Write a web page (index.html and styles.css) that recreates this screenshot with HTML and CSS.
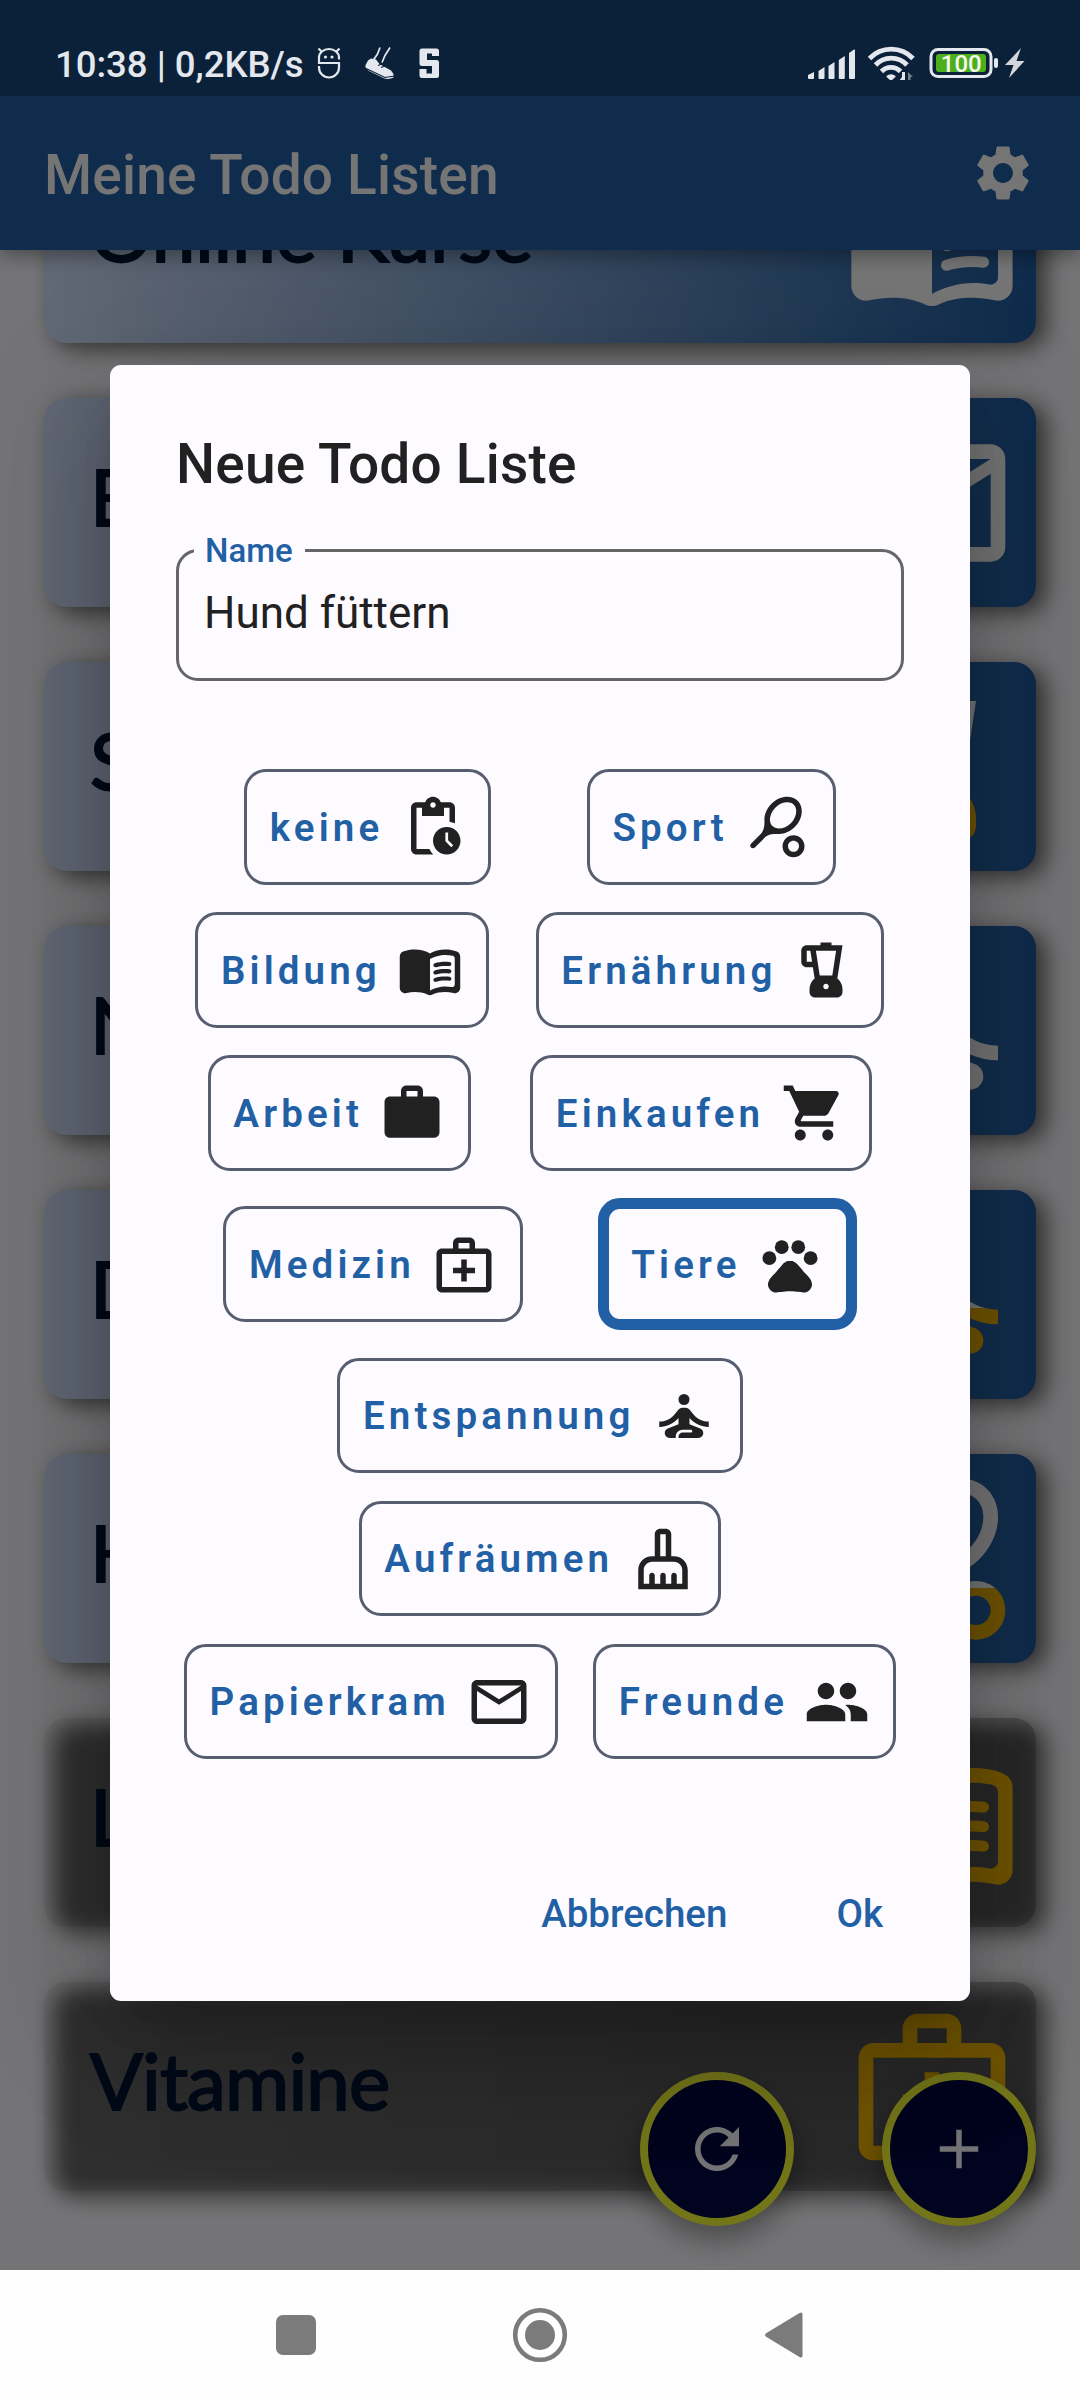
FILE: index.html
```html
<!DOCTYPE html>
<html lang="de">
<head>
<meta charset="utf-8">
<title>Meine Todo Listen</title>
<link rel="stylesheet" href="styles.css">
</head>
<body>
<svg class="sprite" aria-hidden="true">
  <defs>
    <linearGradient id="progress57" gradientUnits="userSpaceOnUse" x1="0" y1="0" x2="0" y2="24">
      <stop offset=".575" stop-color="#fff"/><stop offset=".575" stop-color="#f5b800"/>
    </linearGradient>
    <linearGradient id="progress66" gradientUnits="userSpaceOnUse" x1="0" y1="0" x2="0" y2="24">
      <stop offset=".666" stop-color="#fff"/><stop offset=".666" stop-color="#f5b800"/>
    </linearGradient>
    <symbol id="settings" viewBox="0 0 24 24"><path d="M19.14 12.94c.04-.3.06-.61.06-.94 0-.32-.02-.64-.07-.94l2.03-1.58c.18-.14.23-.41.12-.61l-1.92-3.32c-.12-.22-.37-.29-.59-.22l-2.39.96c-.5-.38-1.03-.7-1.62-.94l-.36-2.54c-.04-.24-.24-.41-.48-.41h-3.84c-.24 0-.43.17-.47.41l-.36 2.54c-.59.24-1.13.57-1.62.94l-2.39-.96c-.22-.08-.47 0-.59.22L2.74 8.87c-.12.21-.08.47.12.61l2.03 1.58c-.05.3-.09.63-.09.94s.02.64.07.94l-2.03 1.58c-.18.14-.23.41-.12.61l1.92 3.32c.12.22.37.29.59.22l2.39-.96c.5.38 1.03.7 1.62.94l.36 2.54c.05.24.24.41.48.41h3.84c.24 0 .44-.17.47-.41l.36-2.54c.59-.24 1.13-.56 1.62-.94l2.39.96c.22.08.47 0 .59-.22l1.92-3.32c.12-.22.07-.47-.12-.61l-2.01-1.58zM12 15.6c-1.98 0-3.6-1.62-3.6-3.6s1.62-3.6 3.6-3.6 3.6 1.62 3.6 3.6-1.62 3.6-3.6 3.6z"/></symbol>
    <symbol id="pending" viewBox="0 0 24 24"><path d="M17 12c-2.76 0-5 2.24-5 5s2.24 5 5 5 5-2.24 5-5-2.24-5-5-5zm1.65 7.35L16.5 17.2V14h1v2.79l1.85 1.85-.7.71zM18 3h-3.18C14.4 1.84 13.3 1 12 1s-2.4.84-2.82 2H6c-1.1 0-2 .9-2 2v15c0 1.1.9 2 2 2h6.11c-.59-.57-1.07-1.25-1.42-2H6V5h2v3h8V5h2v5.08c.71.1 1.38.31 2 .6V5c0-1.1-.9-2-2-2zm-6 2c-.55 0-1-.45-1-1s.45-1 1-1 1 .45 1 1-.45 1-1 1z"/></symbol>
    <symbol id="book" viewBox="0 0 24 24"><path d="M17.5 4.5c-1.95 0-4.05.4-5.5 1.5-1.45-1.1-3.55-1.5-5.5-1.5-1.45 0-2.99.22-4.28.79C1.49 5.62 1 6.33 1 7.14v11.28c0 1.3 1.22 2.26 2.48 1.94.98-.25 2.02-.36 3.02-.36 1.56 0 3.22.26 4.56.92.6.3 1.28.3 1.87 0 1.34-.67 3-.92 4.56-.92 1 0 2.04.11 3.02.36 1.26.33 2.48-.63 2.48-1.94V7.14c0-.81-.49-1.52-1.22-1.85-1.28-.57-2.82-.79-4.27-.79zM21 17.23c0 .63-.58 1.09-1.2.98-.75-.14-1.53-.2-2.3-.2-1.7 0-4.15.65-5.5 1.5V8c1.35-.85 3.8-1.5 5.5-1.5.92 0 1.83.09 2.7.28.46.1.8.51.8.98v9.47z"/><path id="book-line" d="M13.98 11.01c-.32 0-.61-.2-.71-.52-.13-.39.09-.82.48-.94 1.54-.5 3.53-.66 5.36-.45.41.05.71.42.66.83s-.42.71-.83.66c-1.62-.19-3.39-.04-4.73.39-.08.01-.16.03-.23.03z"/><use href="#book-line" y="2.66"/><use href="#book-line" y="5.32"/></symbol>
    <symbol id="tennis" viewBox="0 0 24 24"><path d="M19.52 2.49c-2.34-2.34-6.62-1.87-9.55 1.06-1.6 1.6-2.52 3.87-2.54 5.46-.02 1.58.26 3.89-1.35 5.5l-3.54 3.54c-.39.39-.39 1.02 0 1.41s1.02.39 1.41 0l3.54-3.54c1.61-1.61 3.92-1.33 5.5-1.35s3.86-.94 5.46-2.54c2.93-2.92 3.41-7.2 1.07-9.54zm-9.2 9.19c-1.53-1.53-1.05-4.61 1.06-6.72s5.18-2.59 6.72-1.06c1.53 1.53 1.05 4.61-1.06 6.72s-5.18 2.59-6.72 1.06zM18 17c.53 0 1.04.21 1.41.59.78.78.78 2.05 0 2.83-.37.37-.88.58-1.41.58s-1.04-.21-1.41-.59c-.78-.78-.78-2.05 0-2.83.37-.37.88-.58 1.41-.58m0-2c-1.02 0-2.05.39-2.83 1.17-1.56 1.56-1.56 4.09 0 5.66.78.78 1.81 1.17 2.83 1.17s2.05-.39 2.83-1.17c1.56-1.56 1.56-4.09 0-5.66C20.05 15.39 19.02 15 18 15z"/></symbol>
    <symbol id="blender" viewBox="0 0 24 24"><path d="M16.13 15.13L18 3h-4V2h-4v1H5c-1.1 0-2 .9-2 2v4c0 1.1.9 2 2 2h2.23l.64 4.13C6.74 16.05 6 17.43 6 19v1c0 1.1.9 2 2 2h8c1.1 0 2-.9 2-2v-1c0-1.57-.74-2.95-1.87-3.87zM5 9V5h1.31l.62 4H5zm7 10c-.55 0-1-.45-1-1s.45-1 1-1 1 .45 1 1-.45 1-1 1zm2.29-5H9.72L8.33 5h7.34l-1.38 9z"/></symbol>
    <symbol id="work" viewBox="0 0 24 24"><path d="M20 6h-4V4c0-1.11-.89-2-2-2h-4c-1.11 0-2 .89-2 2v2H4c-1.11 0-1.99.89-1.99 2L2 19c0 1.11.89 2 2 2h16c1.11 0 2-.89 2-2V8c0-1.11-.89-2-2-2zm-6 0h-4V4h4v2z"/></symbol>
    <symbol id="cart" viewBox="0 0 24 24"><path d="M7 18c-1.1 0-1.99.9-1.99 2S5.9 22 7 22s2-.9 2-2-.9-2-2-2zM1 2v2h2l3.6 7.59-1.35 2.45c-.16.28-.25.61-.25.96 0 1.1.9 2 2 2h12v-2H7.42c-.14 0-.25-.11-.25-.25l.03-.12.9-1.63h7.45c.75 0 1.41-.41 1.75-1.03l3.58-6.49c.08-.14.12-.31.12-.48 0-.55-.45-1-1-1H5.21l-.94-2H1zm16 16c-1.1 0-1.99.9-1.99 2s.89 2 1.99 2 2-.9 2-2-.9-2-2-2z"/></symbol>
    <symbol id="medical" viewBox="0 0 24 24"><path d="M20 6h-4V4c0-1.1-.9-2-2-2h-4c-1.1 0-2 .9-2 2v2H4c-1.1 0-2 .9-2 2v12c0 1.1.9 2 2 2h16c1.1 0 2-.9 2-2V8c0-1.1-.9-2-2-2zM10 4h4v2h-4V4zm10 16H4V8h16v12zM13 10h-2v3H8v2h3v3h2v-3h3v-2h-3v-3z"/></symbol>
    <symbol id="pets" viewBox="0 0 24 24"><circle cx="4.5" cy="9.5" r="2.5"/><circle cx="9" cy="5.5" r="2.5"/><circle cx="15" cy="5.5" r="2.5"/><circle cx="19.5" cy="9.5" r="2.5"/><path d="M17.34 14.86c-.87-1.02-1.6-1.89-2.48-2.91-.46-.54-1.05-1.08-1.75-1.32-.11-.04-.22-.07-.33-.09-.25-.04-.52-.04-.78-.04s-.53 0-.79.05c-.11.02-.22.05-.33.09-.7.24-1.28.78-1.75 1.32-.87 1.02-1.6 1.89-2.48 2.91-1.31 1.31-2.92 2.76-2.62 4.79.29 1.02 1.02 2.03 2.33 2.32.73.15 3.06-.44 5.54-.44h.18c2.48 0 4.81.58 5.54.44 1.31-.29 2.04-1.31 2.33-2.32.31-2.04-1.3-3.49-2.61-4.8z"/></symbol>
    <symbol id="yoga" viewBox="0 0 24 24"><circle cx="12" cy="6" r="2"/><path d="M21 16v-2c-2.24 0-4.16-.96-5.6-2.68l-1.34-1.6c-.38-.46-.94-.72-1.53-.72h-1.05c-.59 0-1.15.26-1.53.72l-1.34 1.6C7.16 13.04 5.24 14 3 14v2c2.77 0 5.19-1.17 7-3.25V15l-3.88 1.55c-.67.27-1.12.93-1.12 1.66C5 19.2 5.8 20 6.79 20H9v-.5c0-1.38 1.12-2.5 2.5-2.5h3c.28 0 .5.22.5.5s-.22.5-.5.5h-3c-.83 0-1.5.67-1.5 1.5v.5h7.21c.99 0 1.79-.8 1.79-1.79 0-.73-.45-1.39-1.12-1.66L14 15v-2.25c1.81 2.08 4.23 3.25 7 3.25z"/></symbol>
    <symbol id="cleaning" viewBox="0 0 24 24"><path d="M16 11h-1V3c0-1.1-.9-2-2-2h-2c-1.1 0-2 .9-2 2v8H8c-2.76 0-5 2.24-5 5v7h18v-7c0-2.76-2.24-5-5-5zM11 3h2v8h-2V3zm8 18h-2v-3c0-.55-.45-1-1-1s-1 .45-1 1v3h-2v-3c0-.55-.45-1-1-1s-1 .45-1 1v3H9v-3c0-.55-.45-1-1-1s-1 .45-1 1v3H5v-5c0-1.65 1.35-3 3-3h8c1.65 0 3 1.35 3 3v5z"/></symbol>
    <symbol id="mail" viewBox="0 0 24 24"><path d="M20 4H4c-1.1 0-1.99.9-1.99 2L2 18c0 1.1.9 2 2 2h16c1.1 0 2-.9 2-2V6c0-1.1-.9-2-2-2zm0 14H4V8l8 5 8-5v10zm-8-7L4 6h16l-8 5z"/></symbol>
    <symbol id="people" viewBox="0 0 24 24"><path d="M16 11c1.66 0 2.99-1.34 2.99-3S17.66 5 16 5c-1.66 0-3 1.34-3 3s1.34 3 3 3zm-8 0c1.66 0 2.99-1.34 2.99-3S9.66 5 8 5C6.34 5 5 6.34 5 8s1.34 3 3 3zm0 2c-2.33 0-7 1.17-7 3.5V19h14v-2.5c0-2.33-4.67-3.5-7-3.5zm8 0c-.29 0-.62.02-.97.05 1.16.84 1.97 1.97 1.97 3.45V19h6v-2.5c0-2.33-4.67-3.5-7-3.5z"/></symbol>
    <symbol id="refresh" viewBox="0 0 24 24"><path d="M17.65 6.35C16.2 4.9 14.21 4 12 4c-4.42 0-7.99 3.58-7.99 8s3.57 8 7.99 8c3.73 0 6.84-2.55 7.73-6h-2.08c-.82 2.33-3.04 4-5.65 4-3.31 0-6-2.69-6-6s2.69-6 6-6c1.66 0 3.14.69 4.22 1.78L13 11h7V4l-2.35 2.35z"/></symbol>
    <symbol id="add" viewBox="0 0 24 24"><path d="M19 13h-6v6h-2v-6H5v-2h6V5h2v6h6v2z"/></symbol>
  </defs>
</svg>

<div class="app">
  <header class="app-bar">
    <h1 class="app-title">Meine Todo Listen</h1>
    <svg class="icon"><use href="#settings"/></svg>
  </header>
  <main class="lists">
    <article class="card"><span class="card-name">Online Kurse</span><svg class="card-icon"><use href="#book"/></svg></article>
    <article class="card"><span class="card-name">E</span><svg class="card-icon"><use href="#mail"/></svg></article>
    <article class="card"><span class="card-name">S</span><svg class="card-icon part66"><use href="#blender"/></svg></article>
    <article class="card"><span class="card-name">N</span><svg class="card-icon"><use href="#yoga"/></svg></article>
    <article class="card"><span class="card-name">D</span><svg class="card-icon part57"><use href="#yoga"/></svg></article>
    <article class="card"><span class="card-name">K</span><svg class="card-icon part66"><use href="#tennis"/></svg></article>
    <article class="card done"><span class="card-name">L</span><svg class="card-icon"><use href="#book"/></svg></article>
    <article class="card done"><span class="card-name">Vitamine</span><svg class="card-icon"><use href="#medical"/></svg></article>
  </main>
  <div class="fabs">
    <div class="fab"><svg class="icon"><use href="#refresh"/></svg></div>
    <div class="fab"><svg class="icon"><use href="#add"/></svg></div>
  </div>
</div>

<div class="scrim">
  <section class="dialog">
    <h2 class="dialog-title">Neue Todo Liste</h2>
    <div class="field"><span class="field-label">Name</span><span class="field-value">Hund füttern</span></div>
    <div class="chips">
      <div class="chip">keine<svg class="icon"><use href="#pending"/></svg></div>
      <div class="chip">Sport<svg class="icon"><use href="#tennis"/></svg></div>
      <div class="chip">Bildung<svg class="icon"><use href="#book"/></svg></div>
      <div class="chip">Ernährung<svg class="icon"><use href="#blender"/></svg></div>
      <div class="chip">Arbeit<svg class="icon"><use href="#work"/></svg></div>
      <div class="chip">Einkaufen<svg class="icon"><use href="#cart"/></svg></div>
      <div class="chip">Medizin<svg class="icon"><use href="#medical"/></svg></div>
      <div class="chip selected">Tiere<svg class="icon"><use href="#pets"/></svg></div>
      <div class="chip">Entspannung<svg class="icon"><use href="#yoga"/></svg></div>
      <div class="chip">Aufräumen<svg class="icon"><use href="#cleaning"/></svg></div>
      <div class="chip">Papierkram<svg class="icon"><use href="#mail"/></svg></div>
      <div class="chip">Freunde<svg class="icon"><use href="#people"/></svg></div>
    </div>
    <div class="actions"><span>Abbrechen</span><span>Ok</span></div>
  </section>
</div>

<div class="status-bar">
  <span class="status-text">10:38 | 0,2KB/s</span>
  <svg class="status-left" width="124" height="36" viewBox="0 0 124 36">
    <g fill="none" stroke="#e4e8ee" stroke-width="2.2">
      <path d="M22 15.500v-2a10 8.500 0 0 0-20 0v5.500h20v4.500a10 10 0 0 1-20 0v-1.500"/>
      <path d="M4.500 7.500L1.500 4.500M19.500 7.500l3-3"/>
    </g>
    <g fill="#e4e8ee"><circle cx="8.500" cy="13" r="1.600"/><circle cx="15" cy="13" r="1.600"/>
      <path d="M48.500 21l2.500-4.500 3-2 5 1 3.500 4.500 11.500 6.500 2.500 3.500v3.500q-4 2.200-9 1L52 27l-3.500-3z"/>
      <path d="M102.500 7q0-2.500 2.500-2.500h14.500q2.500 0 2.500 2.500v5h-7V9.500h-5V16h9.500q2.500 0 2.500 2.500v13q0 2.500-2.500 2.500H105q-2.500 0-2.500-2.500V25h7v4.500h5.500v-7.500h-10q-2.500 0-2.500-2.500z"/></g>
    <path d="M63 3.500l-2.500 6.500-5.500 8M73 3.500l-5 8-3 7" fill="none" stroke="#e4e8ee" stroke-width="1.700"/>
    <path d="M48 24l20 9.500 9.500-1.500M61 21.500l4-1.500M64 23.500l4-1.500" fill="none" stroke="#0b2138" stroke-width="1.200"/>
  </svg>
  <svg class="status-right" width="220" height="40" viewBox="0 0 220 40">
    <path d="M1 38v-3l6-3v6q0 1-1 1H2q-1 0-1-1zM11.500 38V31l6-4v11q0 1-1 1h-4q-1 0-1-1zM21.500 38V26l6-4v16q0 1-1 1h-4q-1 0-1-1zM31.800 38V20l6-4v22q0 1-1 1h-4q-1 0-1-1zM42 38V13l5-3.500q1-.5 1 1V38q0 1-1 1h-4q-1 0-1-1z" fill="#e4e8ee"/>
    <g fill="none" stroke="#e4e8ee" stroke-width="4.800">
      <path d="M62.500 18.500a30 30 0 0 1 43.500 0M68.500 25a21.500 21.500 0 0 1 31.500 0M74.500 31.500a13 13 0 0 1 19 0"/>
    </g>
    <path d="M79.500 36a6.500 6.500 0 0 1 9 0v1l-3.500 3h-2L79.500 37z" fill="#e4e8ee"/>
    <path d="M98 32v9h-6l3-4V32z" fill="#e4e8ee"/><path d="M101 41v-9l5 5h-2.500v4z" fill="#77828f"/>
    <rect x="124" y="9.500" width="60" height="27" rx="7" fill="none" stroke="#e4e8ee" stroke-width="3"/>
    <rect x="129" y="14" width="50" height="18" rx="3" fill="#4caf1b"/>
    <rect x="187" y="18" width="4" height="10" rx="2" fill="#e4e8ee"/>
    <path d="M214 8l-16 17h8.500l-4.500 13 15.500-17h-8z" fill="#d4d6da"/>
    <text x="154.300" y="31.600" text-anchor="middle" class="battery-text">100</text>
  </svg>
</div>

<nav class="nav-bar">
  <svg width="540" height="60" viewBox="0 0 540 60" fill="#7b7b7b">
    <rect x="6" y="10" width="40" height="40" rx="7"/>
    <circle cx="270" cy="30" r="24.800" fill="none" stroke="#7b7b7b" stroke-width="4.600"/><circle cx="270" cy="30" r="15"/>
    <path d="M496.500 28l33-20q3-1.500 3 1.500v41q0 3-3 1.500l-33-20q-3-2 0-4z"/>
  </svg>
</nav>
</body>
</html>
```
FILE: styles.css
```css
* { box-sizing: border-box; }

body {
  margin: 0;
  width: 1080px;
  height: 2400px;
  position: relative;
  overflow: hidden;
  background: #fefefe;
  font-family: Roboto, "Liberation Sans", sans-serif;
}

.sprite { position: absolute; width: 0; height: 0; }

.app {
  height: 2270px;
  display: flex;
  flex-direction: column;
  background: #fdfbff;
  position: relative;
  overflow: hidden;
  isolation: isolate;
}

.icon { width: 66px; height: 66px; flex: none; fill: currentColor; }

.app-bar {
  height: 250px;
  flex: none;
  padding: 96px 44px 0;
  display: flex;
  align-items: center;
  justify-content: space-between;
  background: #2260a5;
  color: #fff;
  position: relative;
  z-index: 2;
  box-shadow: 0 6px 18px rgba(0, 0, 0, .35);
}
.app-title { margin: 3px 0 0; font-size: 55px; font-weight: 500; line-height: 64px; letter-spacing: .2px; }

.lists {
  flex: 1;
  min-height: 0;
  display: flex;
  flex-direction: column;
  gap: 55px;
  padding: 0 44px;
  overflow: hidden;
}

.card {
  position: relative;
  height: 209px;
  flex: none;
  display: flex;
  align-items: center;
  justify-content: space-between;
  padding: 0 16.500px 0 46px;
  color: #001735;
}
/* The list is scrolled, so its first card is partly cut off at the top. */
.card:first-child { margin-top: -115.700px; }
.card::before {
  content: "";
  position: absolute;
  z-index: 0;
  inset: 0;
  border-radius: 22px;
  background: linear-gradient(90deg, #d6e3ff, #205ea4);
}
/* The shadow continues under the card, because finished cards are translucent. */
.card::after {
  content: "";
  position: absolute;
  z-index: -1;
  inset: 0;
  border-radius: 22px;
  background: rgba(0, 0, 0, .56);
  transform: translate(10px, 6px);
  filter: blur(11px);
}
.card.done::before { background: linear-gradient(90deg, rgba(0, 0, 0, .06), rgba(0, 0, 0, .22)); }

.card-name {
  position: relative;
  z-index: 1;
  font-family: Lato, sans-serif;
  font-size: 78px;
  line-height: 94px;
  margin-top: -14px;
  -webkit-text-stroke: 2px #001735;
}
.done .card-name { letter-spacing: -.8px; }
.card-icon { position: relative; z-index: 1; width: 176px; height: 176px; fill: #fff; }
.part57 { fill: url(#progress57); }
.part66 { fill: url(#progress66); }
.done .card-icon { fill: #f5b800; }

.fabs {
  position: absolute;
  z-index: 2;
  right: 44px;
  bottom: 44px;
  display: flex;
  gap: 88px;
}
.fab {
  width: 154px;
  height: 154px;
  display: flex;
  align-items: center;
  justify-content: center;
  border: 8px solid #fbff38;
  border-radius: 50%;
  background: #000a42;
  color: #fdfbff;
  box-shadow: 0 14px 28px rgba(0, 0, 0, .35);
}

.scrim {
  position: absolute;
  z-index: 3;
  left: 0;
  top: 0;
  width: 1080px;
  height: 2270px;
  padding-top: 365px;
  display: flex;
  justify-content: center;
  align-items: flex-start;
  background: rgba(0, 0, 0, .54);
  overflow: hidden;
}

.dialog {
  width: 860px;
  height: 1635.500px;
  padding: 67px 66px 0;
  border-radius: 11px;
  background: #fdfbff;
  color: #212121;
  box-shadow: 0 30px 41px -19px rgba(0, 0, 0, .2), 0 66px 104px 8px rgba(0, 0, 0, .14), 0 25px 126px 22px rgba(0, 0, 0, .12);
}
.dialog-title { margin: 0; font-size: 55px; font-weight: 500; line-height: 64px; letter-spacing: .2px; }

.field {
  position: relative;
  margin-top: 53px;
  height: 132px;
  padding: 35px 27px 0 25px;
  border: 3px solid #666;
  border-radius: 22px;
  font-size: 44px;
  line-height: 52px;
}
.field-label {
  position: absolute;
  left: 15px;
  top: -21px;
  padding: 1px 12px 0 11px;
  background: #fdfbff;
  color: #2260a5;
  font-size: 33px;
  font-weight: 500;
  line-height: 38px;
}

.chips {
  margin-top: 88px;
  display: flex;
  flex-wrap: wrap;
  justify-content: space-evenly;
  align-items: center;
  gap: 27.500px;
}
.chip {
  height: 115.500px;
  display: flex;
  align-items: center;
  gap: 16.500px;
  padding: 1px 22.500px 0;
  border: 3px solid #565e70;
  border-radius: 22px;
  color: #2260a5;
  font-size: 38.500px;
  font-weight: 600;
  letter-spacing: 4.125px;
}
.chip .icon { fill: #212121; }
.chip.selected { height: 132px; border: 11px solid #2260a5; }

.actions {
  display: flex;
  justify-content: flex-end;
  gap: 109px;
  margin-top: 132px;
  padding-right: 21px;
  color: #2260a5;
  font-size: 38.500px;
  font-weight: 500;
  line-height: 46px;
}

.status-bar {
  position: absolute;
  z-index: 4;
  left: 0;
  top: 0;
  width: 1080px;
  height: 96px;
  padding: 0 53px 0 55px;
  display: flex;
  align-items: flex-start;
  background: rgba(0, 0, 0, .25);
  color: #e4e8ee;
}
.status-text { margin-top: 43px; font-size: 36.500px; line-height: 44px; font-weight: 500; white-space: nowrap; }
.status-left { margin: 44px 0 0 13px; }
.status-right { margin: 40px 0 0 auto; }
.battery-text { font: 500 24px Roboto, sans-serif; fill: #f4f8f0; }

.nav-bar {
  height: 130px;
  display: flex;
  align-items: center;
  justify-content: center;
  background: #fefefe;
}
```
